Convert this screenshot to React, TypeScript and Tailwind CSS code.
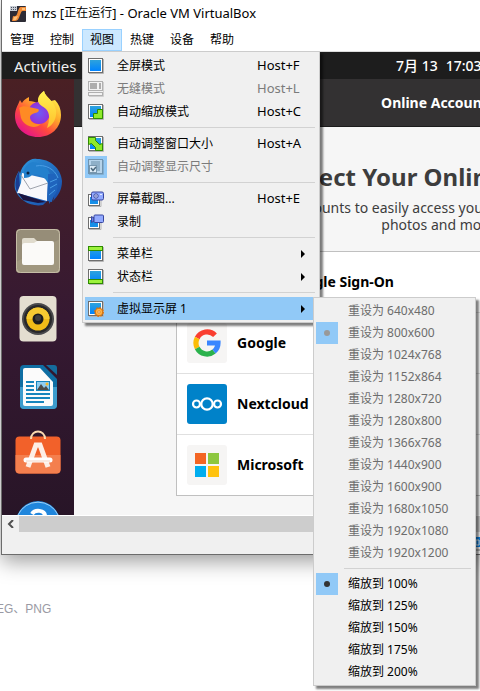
import type { ReactNode } from "react";
import clsx from "clsx";

const menus = ["管理", "控制", "视图", "热键", "设备", "帮助"];

const resolutions = [
  "640x480",
  "800x600",
  "1024x768",
  "1152x864",
  "1280x720",
  "1280x800",
  "1366x768",
  "1440x900",
  "1600x900",
  "1680x1050",
  "1920x1080",
  "1920x1200",
];

const scales = ["100%", "125%", "150%", "175%", "200%"];

/* ---------- menu icons ---------- */

const Screen = ({ children }: { children?: ReactNode }) => (
  <svg viewBox="0 0 16 16" className="size-4" aria-hidden="true">
    <defs>
      <linearGradient id="screen" x1="0" y1="0" x2="0" y2="1">
        <stop offset="0" stopColor="#2ea3dc" />
        <stop offset="1" stopColor="#0083ff" />
      </linearGradient>
    </defs>
    <path d="M1 15.5h14.5V1" fill="none" stroke="#b5b5b5" />
    <rect x=".5" y=".5" width="14" height="14" fill="#fff" stroke="#6e6e6e" />
    <rect x="2" y="2" width="11" height="11" fill="url(#screen)" />
    {children}
  </svg>
);

const FullscreenIcon = () => <Screen />;

const SeamlessIcon = () => (
  <svg viewBox="0 0 16 16" className="size-4" aria-hidden="true">
    <path d="M1 15.5h14.5V1" fill="none" stroke="#d0d0d0" />
    <rect x=".5" y=".5" width="14" height="9" fill="#f2f2f2" stroke="#b0b0b0" />
    <rect x="2" y="2" width="7" height="6" fill="#adadad" />
    <rect x="11" y="2" width="2" height="6" fill="#adadad" />
    <rect x=".5" y="11.5" width="14" height="3" fill="#f2f2f2" stroke="#b0b0b0" />
  </svg>
);

const ScaleIcon = () => (
  <Screen>
    <path d="M5.5 14.5v-5h4v-4h5v9z" fill="#8fea2c" stroke="#2e8b00" />
  </Screen>
);

const AdjustIcon = () => (
  <Screen>
    <path
      d="M.5 1.5h7v3l4 4 3-1v7h-7v-3l-4-4-3 1z"
      fill="#8fea2c"
      stroke="#2e8b00"
    />
  </Screen>
);

const AutoResizeIcon = () => (
  <svg viewBox="0 0 16 16" className="size-4" aria-hidden="true">
    <path d="M1 15.5h14.5V1" fill="none" stroke="#83aecf" />
    <rect x=".5" y=".5" width="14" height="14" fill="#b5d3ea" stroke="#6f94b0" />
    <path d="M3 2h9v10H9V6H3z" fill="#8fb0c8" />
    <rect x="1.5" y="6.5" width="7" height="7" fill="#dcebf6" stroke="#7897ae" />
    <path d="m3 9 2 2.5L8 8" fill="none" stroke="#4c687c" strokeWidth="1.5" />
  </svg>
);

const CameraIcon = () => (
  <svg viewBox="0 0 16 16" className="size-4" aria-hidden="true">
    <path d="M1 15.5h12V9" fill="none" stroke="#b5b5b5" />
    <rect x=".5" y="3.5" width="11" height="11" fill="#fff" stroke="#6e6e6e" />
    <rect x="2" y="6" width="8" height="7" fill="#168fe8" />
    <rect x="3.5" y="1" width="12" height="8" rx="1.5" fill="#92aaff" stroke="#39479f" />
    <circle cx="8" cy="5" r="2.2" fill="#d9e1ff" stroke="#39479f" />
    <circle cx="8" cy="5" r=".8" fill="#39479f" />
    <path d="M12 3.5h2" stroke="#e7ecff" />
  </svg>
);

const RecordIcon = () => (
  <svg viewBox="0 0 16 16" className="size-4" aria-hidden="true">
    <path d="M1 15.5h12V9" fill="none" stroke="#b5b5b5" />
    <rect x=".5" y="3.5" width="11" height="11" fill="#fff" stroke="#6e6e6e" />
    <rect x="2" y="6" width="8" height="7" fill="#168fe8" />
    <path d="M6 4 3.5 2.500v6L6 7z" fill="#6d83e8" stroke="#39479f" />
    <rect x="6" y="1" width="9.5" height="7.5" rx="1" fill="#92aaff" stroke="#39479f" />
  </svg>
);

const MenuBarIcon = () => (
  <Screen>
    <rect x=".5" y=".5" width="14" height="4" fill="#9cf23c" stroke="#2e8b00" />
  </Screen>
);

const StatusBarIcon = () => (
  <Screen>
    <rect x=".5" y="10.5" width="14" height="4" fill="#9cf23c" stroke="#2e8b00" />
  </Screen>
);

const VirtualScreenIcon = () => (
  <Screen>
    <circle cx="11" cy="11" r="3.8" fill="#ffb347" stroke="#d9720a" />
    <circle cx="11" cy="11" r="4.5" fill="none" stroke="#d9720a" strokeDasharray="1.8 1.7" />
    <circle cx="11" cy="11" r="1.2" fill="#fff1d8" stroke="#d9720a" strokeWidth=".7" />
  </Screen>
);

const MachineIcon = () => (
  <svg viewBox="0 0 16 16" className="size-4" aria-hidden="true">
    <rect width="16" height="16" rx="1" fill="#2d2b35" />
    <path d="M11 1h5v4h-3c-2 0-2 2-3 4-1 3-2 6-5 6H2l1-5c4 1 4-2 5-5 1-2 1-4 3-4z" fill="#f08a35" />
    <path d="M12 2h3v2h-3zM4 11l4-1-2 4H3z" fill="#ffc079" />
    <rect width="7" height="5" fill="#c8ccd4" />
    <path d="M1 1.5h5M1 3.5h5" stroke="#4c5563" strokeDasharray="1 1" />
  </svg>
);

/* ---------- dock icons ---------- */

const FirefoxIcon = () => (
  <svg viewBox="0 0 48 48" className="size-12" aria-hidden="true">
    <defs>
      <linearGradient id="fox" x1=".85" y1=".1" x2=".2" y2=".95">
        <stop offset="0" stopColor="#fff04a" />
        <stop offset=".35" stopColor="#ffa72a" />
        <stop offset=".65" stopColor="#ff4a3d" />
        <stop offset="1" stopColor="#e3128d" />
      </linearGradient>
      <linearGradient id="flame" x1="0" y1="0" x2="0" y2="1">
        <stop offset="0" stopColor="#fff250" />
        <stop offset="1" stopColor="#ffbf2b" />
      </linearGradient>
      <radialGradient id="globe">
        <stop offset="0" stopColor="#6f5cf5" />
        <stop offset="1" stopColor="#9430d8" />
      </radialGradient>
    </defs>
    <path
      d="M6 10c1 2 2 3 2 3 1-2 3-4 7-6v4c4 0 6 1 8 2l2-3c0-4 2-7 5-9 1 4 3 6 7 10l4-1c4 4 6 9 6 15 0 13-10 22-23 22S1 38 1 26C1 19 4 15 6 10z"
      fill="url(#fox)"
    />
    <circle cx="25" cy="23" r="11" fill="url(#globe)" />
    <path
      d="M24 10c0-4 3-7 6-9 1 6 10 9 12 19 1 9-3 15-9 18 3-8 3-15-1-19-3-3-8-4-8-9z"
      fill="url(#flame)"
    />
    <path
      d="M5 18c3-2 6-2 10-1l9 2c2 1 0 4-3 4-3 1-5 2-5 4 0 5 5 8 11 7-6 6-17 2-20-6-1-4-1-8-2-10z"
      fill="#ff8a24"
    />
  </svg>
);

const ThunderbirdIcon = () => (
  <svg viewBox="0 0 48 48" className="size-12" aria-hidden="true">
    <defs>
      <linearGradient id="bird" x1="0" y1="0" x2="1" y2="1">
        <stop offset="0" stopColor="#2f9be0" />
        <stop offset="1" stopColor="#1747a6" />
      </linearGradient>
    </defs>
    <path
      d="M12 5c3-3 7-5 11-4 13 0 24 9 25 22 0 9-4 15-9 20l1-4-5 7v-5l-6 6C17 49 5 43 1 31c-1-6 0-12 4-18l1 3c1-5 3-8 6-11z"
      fill="url(#bird)"
    />
    <path d="M5 13C1 20 0 29 4 36l10 7-8-12z" fill="#1a3d91" />
    <path d="m8 15 4 1 22 5-1 22L3 35l4-10z" fill="#f8f8fb" />
    <path d="m7 17 9 14 18-6" fill="none" stroke="#9fa3ad" />
    <path d="M10 14c0-5 4-9 9-10 8 1 15 5 17 12l-2 9c-3-6-9-9-15-9-3 3-5 4-9 4z" fill="#2380cd" />
    <path d="M34 16h6c4 5 5 12 2 19l-3 4-1 5-5-1 1-20z" fill="#1f64bd" />
    <path d="M22 8c9-2 19 3 22 12M36 24l7-3M36 30l7-4M35 37l6-5" fill="none" stroke="#4a9ee6" />
    <circle cx="14" cy="15" r="1.5" fill="#0b2342" />
    <path d="m4 35 28 9-8 1-15-3z" fill="#1b1440" />
  </svg>
);

const FilesIcon = () => (
  <svg viewBox="0 0 48 48" className="size-12" aria-hidden="true">
    <rect x="2" y="3" width="44" height="44" rx="4" fill="#968d78" />
    <path d="M2 36 46 13v30a4 4 0 0 1-4 4H6a4 4 0 0 1-4-4z" fill="#a0977f" />
    <rect x="2.5" y="3.5" width="43" height="43" rx="4" fill="none" stroke="#c5bda6" />
    <path d="M8 14a2 2 0 0 1 2-2h10l3 3v6H8z" fill="#e0dbcd" />
    <path d="M8 20c0-2 1-3 3-3h9l3-2h15a2 2 0 0 1 2 2v20a2 2 0 0 1-2 2H10a2 2 0 0 1-2-2z" fill="#fbfaf8" />
  </svg>
);

const RhythmboxIcon = () => (
  <svg viewBox="0 0 48 48" className="size-12" aria-hidden="true">
    <rect x="5.5" y="2" width="37" height="45.5" rx="4" fill="#e4ded0" />
    <circle cx="24" cy="25" r="16" fill="#4a4a4c" />
    <circle cx="24" cy="25" r="14" fill="#28282a" />
    <circle cx="24" cy="25" r="11.5" fill="#f0bb18" />
    <path d="M12.5 25a11.5 11.5 0 0 1 23 0z" fill="#f6ca32" />
    <circle cx="24" cy="25" r="5.5" fill="#1d1d1d" />
    <circle cx="24" cy="24" r="3" fill="#3e3e3e" />
  </svg>
);

const WriterIcon = () => (
  <svg viewBox="0 0 48 48" className="size-12" aria-hidden="true">
    <path d="M10 3h19l14 14v26a4 4 0 0 1-4 4H10a4 4 0 0 1-4-4V7a4 4 0 0 1 4-4z" fill="#0f6ea3" />
    <path d="M6 25h37v18a4 4 0 0 1-4 4H10a4 4 0 0 1-4-4z" fill="#3d9ccd" />
    <path d="M32 3h8a3 3 0 0 1 3 3v7z" fill="#156c9c" />
    <path d="M11 6h15l13 14v22a2 2 0 0 1-2 2H11a2 2 0 0 1-2-2V8a2 2 0 0 1 2-2z" fill="#fbfbfb" />
    <path d="M12 20h8M12 24h8M12 28h8M12 32h24M12 36h24M12 40h18" stroke="#1685bd" strokeWidth="2" />
    <rect x="22.5" y="19.5" width="13" height="9" fill="#8fcdf0" stroke="#1685bd" />
    <path d="m23 28 4-6 3 4 2-2 3 4z" fill="#4c4c48" />
    <circle cx="33" cy="22" r="1.5" fill="#f4b92a" />
  </svg>
);

const SoftwareIcon = () => (
  <svg viewBox="0 0 48 48" className="size-12" aria-hidden="true">
    <rect x="1.5" y="6.5" width="45" height="37" rx="4" fill="#f2612a" />
    <path d="M1.5 25h45v14.5a4 4 0 0 1-4 4h-37a4 4 0 0 1-4-4z" fill="#f47f4e" />
    <path d="M17 9c0-10 14-10 14 0" fill="none" stroke="#fbd9ae" strokeWidth="2" />
    <path d="m14 37 8-22h4l8 22" fill="none" stroke="#fdeee6" strokeWidth="5" />
    <path d="M12 30h24" stroke="#fff" strokeWidth="5" strokeLinecap="round" />
    <path d="M12 31h24" stroke="#f3d3c4" />
  </svg>
);

const HelpIcon = () => (
  <svg viewBox="0 0 48 48" className="size-12" aria-hidden="true">
    <circle cx="24" cy="25" r="22" fill="#2086dc" />
    <path d="M4 17a22 22 0 0 1 40 0" fill="none" stroke="#9bd0f7" />
    <path d="M18 16c3-5 13-4 13 2 0 5-6 5-6 11" fill="none" stroke="#fff" strokeWidth="4" />
  </svg>
);

const dock = [
  { name: "Firefox", icon: <FirefoxIcon /> },
  { name: "Thunderbird", icon: <ThunderbirdIcon /> },
  { name: "Files", icon: <FilesIcon /> },
  { name: "Rhythmbox", icon: <RhythmboxIcon /> },
  { name: "LibreOffice Writer", icon: <WriterIcon /> },
  { name: "Ubuntu Software", icon: <SoftwareIcon /> },
  { name: "Help", icon: <HelpIcon /> },
];

/* ---------- account logos ---------- */

const UbuntuLogo = () => (
  <svg viewBox="0 0 40 40" className="size-10" aria-hidden="true">
    <rect width="40" height="40" rx="3" fill="#f6f5f4" />
    <circle cx="20" cy="20" r="13" fill="#e95420" />
    <circle cx="20" cy="20" r="6" fill="none" stroke="#fff" strokeWidth="2" />
  </svg>
);

const GoogleLogo = () => (
  <svg viewBox="0 0 40 40" className="size-10" aria-hidden="true">
    <rect width="40" height="40" rx="3" fill="#f6f5f4" />
    <g fill="none" strokeWidth="5.2">
      <path d="M28 12.2A11 11 0 0 0 10.2 15" stroke="#fa3e30" />
      <path d="M10.2 15a11 11 0 0 0 0 10" stroke="#fbbc05" />
      <path d="M10.2 25A11 11 0 0 0 27 28.5" stroke="#2bb24c" />
      <path d="M27 28.5a11 11 0 0 0 4-8.5H20" stroke="#3a86ff" />
    </g>
  </svg>
);

const NextcloudLogo = () => (
  <svg viewBox="0 0 40 40" className="size-10" aria-hidden="true">
    <rect width="40" height="40" rx="3" fill="#0082c9" />
    <g fill="none" stroke="#fff" strokeWidth="2.2">
      <circle cx="20" cy="20" r="5.7" />
      <circle cx="9.5" cy="20" r="3.5" />
      <circle cx="30.5" cy="20" r="3.5" />
    </g>
  </svg>
);

const MicrosoftLogo = () => (
  <svg viewBox="0 0 40 40" className="size-10" aria-hidden="true">
    <rect width="40" height="40" rx="3" fill="#f6f5f4" />
    <path d="M8 8h11v11H8z" fill="#f36523" />
    <path d="M21 8h11v11H21z" fill="#8dc73f" />
    <path d="M8 21h11v11H8z" fill="#00adef" />
    <path d="M21 21h11v11H21z" fill="#ffc20e" />
  </svg>
);

const accounts = [
  { name: "Ubuntu Single Sign-On", logo: <UbuntuLogo /> },
  { name: "Google", logo: <GoogleLogo /> },
  { name: "Nextcloud", logo: <NextcloudLogo /> },
  { name: "Microsoft", logo: <MicrosoftLogo /> },
];

/* ---------- menus ---------- */

type ItemProps = {
  icon: ReactNode;
  label: string;
  shortcut?: string;
  disabled?: boolean;
  checked?: boolean;
  submenu?: boolean;
  active?: boolean;
};

const MenuItem = ({ icon, label, shortcut, disabled, checked, submenu, active }: ItemProps) => (
  <button
    type="button"
    role={checked ? "menuitemcheckbox" : "menuitem"}
    aria-checked={checked}
    aria-haspopup={submenu ? "menu" : undefined}
    disabled={disabled}
    className={clsx(
      "flex h-[23px] w-full items-center text-left",
      disabled ? "text-[#7b7b7b]" : "text-black",
      active && "bg-[#91c9f7]",
    )}
  >
    <span className={clsx("flex size-[22px] items-center justify-center", checked && "bg-[#91c9f7]")}>
      {icon}
    </span>
    <span className="ml-2.5 flex-1">{label}</span>
    {shortcut && <span className="w-15 text-[13px]">{shortcut}</span>}
    {submenu && (
      <svg viewBox="0 0 4 8" className="mr-3 h-2 w-1" aria-hidden="true">
        <path d="M0 0v8l4-4z" />
      </svg>
    )}
  </button>
);

const Separator = () => (
  <div role="separator" className="mr-0.5 ml-7 flex h-[9px] items-center">
    <div className="h-px flex-1 bg-[#d2d2d2]" />
  </div>
);

type RadioProps = { group: string; label: string; checked: boolean; disabled?: boolean };

const RadioItem = ({ group, label, checked, disabled }: RadioProps) => (
  <label className={clsx("flex h-[22px] items-center gap-2.5", disabled ? "text-[#6d6d6d]" : "text-black")}>
    <input
      type="radio"
      name={group}
      defaultChecked={checked}
      disabled={disabled}
      className="flex size-[22px] appearance-none items-center justify-center before:size-1.5 before:rounded-full before:bg-transparent checked:bg-[#91c9f7] checked:before:bg-[#333] checked:disabled:before:bg-[#999]"
    />
    {label}
  </label>
);

const panel = "border border-[#ccc] bg-[#f0f0f0] p-0.5 shadow-[3px_3px_2px_rgba(0,0,0,0.5)]";

const ScreenMenu = () => (
  <div role="menu" className={clsx("absolute top-0 left-full -ml-1 w-[163px]", panel)}>
    {resolutions.map((r) => (
      <RadioItem key={r} group="resolution" label={`重设为 ${r}`} checked={r === "800x600"} disabled />
    ))}
    <Separator />
    {scales.map((s) => (
      <RadioItem key={s} group="scale" label={`缩放到 ${s}`} checked={s === "100%"} />
    ))}
  </div>
);

const ViewMenu = () => (
  <div role="menu" className={clsx("absolute top-full left-0 z-10 w-[238px]", panel)}>
    <MenuItem icon={<FullscreenIcon />} label="全屏模式" shortcut="Host+F" />
    <MenuItem icon={<SeamlessIcon />} label="无缝模式" shortcut="Host+L" disabled />
    <MenuItem icon={<ScaleIcon />} label="自动缩放模式" shortcut="Host+C" />
    <Separator />
    <MenuItem icon={<AdjustIcon />} label="自动调整窗口大小" shortcut="Host+A" />
    <MenuItem icon={<AutoResizeIcon />} label="自动调整显示尺寸" disabled checked />
    <Separator />
    <MenuItem icon={<CameraIcon />} label="屏幕截图..." shortcut="Host+E" />
    <MenuItem icon={<RecordIcon />} label="录制" />
    <Separator />
    <MenuItem icon={<MenuBarIcon />} label="菜单栏" submenu />
    <MenuItem icon={<StatusBarIcon />} label="状态栏" submenu />
    <Separator />
    <div className="relative">
      <MenuItem icon={<VirtualScreenIcon />} label="虚拟显示屏 1" submenu active />
      <ScreenMenu />
    </div>
  </div>
);

const MenuBar = () => (
  <nav className="flex h-[22px]">
    {menus.map((m) => (
      <div key={m} className="relative">
        <button
          type="button"
          className={clsx(
            "h-[22px] w-10 border",
            m === "视图" ? "border-[#99d1ff] bg-[#cce8ff]" : "border-transparent",
          )}
        >
          {m}
        </button>
        {m === "视图" && <ViewMenu />}
      </div>
    ))}
  </nav>
);

/* ---------- guest ---------- */

const OnlineAccounts = () => (
  <section className="flex-1 bg-[#f6f6f6] text-[#3d3d3d]">
    <header className="flex h-12 items-center justify-center border-b border-[#1c1c1c] bg-[#333132] text-sm font-bold text-white">
      Online Accounts
    </header>
    <div className="flex flex-col items-center pt-8 text-center">
      <h1 className="text-2xl leading-9 font-bold">Connect Your Online Accounts</h1>
      <p className="mt-1 text-sm leading-[17px]">
        Connect your accounts to easily access your email, calendar, documents,
        <br />
        photos and more
      </p>
      <ul className="mt-[18px] w-[524px] border border-[#c0c0c0] bg-white text-left">
        {accounts.map((a) => (
          <li key={a.name} className="border-b border-[#e0e0e0] last:border-b-0">
            <button type="button" className="flex h-15 w-full items-center gap-2.5 px-2.5 text-sm font-bold text-black">
              {a.logo}
              {a.name}
            </button>
          </li>
        ))}
      </ul>
    </div>
  </section>
);

const Guest = () => (
  <div className="h-[463px] overflow-hidden">
    <div className="w-[800px]">
      <div className="flex h-[27px] items-center bg-[#1d1d1d] pl-3 text-[15px] text-[#f0f0f0]">
        <button type="button" className="w-[382px] text-left">
          Activities
        </button>
        <time className="flex gap-2 text-sm font-medium text-white">
          <span>7月 13</span>
          <span>17:03</span>
        </time>
      </div>
      <div className="flex">
        <aside className="flex w-18 flex-col bg-linear-to-b from-[#4a2024] via-[#361932] to-[#251425] pt-px">
          {dock.map((d) => (
            <button key={d.name} type="button" aria-label={d.name} className="flex h-17 items-center justify-center">
              {d.icon}
            </button>
          ))}
        </aside>
        <OnlineAccounts />
      </div>
    </div>
  </div>
);

const App = () => {
  return (
    <div className="min-h-screen overflow-hidden bg-white font-['Noto_Sans','Noto_Sans_CJK_SC',sans-serif] text-xs text-black">
      <div className="relative ml-px border-b border-l border-[#6c6c6c] bg-white shadow-[0_6px_20px_rgba(0,0,0,0.4)]">
        <div className="flex h-[29px] items-center gap-1.5 pb-0.5 pl-2">
          <MachineIcon />
          <h2 className="flex items-center text-[13px] whitespace-pre">
            mzs [<span className="text-xs">正在运行</span>] - Oracle VM VirtualBox
          </h2>
        </div>
        <MenuBar />
        <div className="h-px bg-[#dcdcdc]" />
        <Guest />
        <div className="flex h-[17px] items-center border-t border-white bg-[#f0f0f0]">
          <button type="button" aria-label="Scroll left" className="flex w-[17px] justify-center">
            <svg viewBox="0 0 7 8" className="h-2 w-[7px]" aria-hidden="true">
              <path d="M6 0 2 4l4 4" fill="none" stroke="#505050" strokeWidth="2" />
            </svg>
          </button>
          <div className="h-full flex-1 bg-[#cdcdcd]" />
        </div>
        <footer className="flex h-[22px] items-center justify-end bg-[#f0f0f0]">
          <svg viewBox="0 0 8 16" className="h-4 w-2" aria-hidden="true">
            <path d="M0 2h8v10H0z" fill="#0b84e8" />
            <path d="M4 5h3v5H4z" fill="none" stroke="#fff" />
            <path d="M0 15h8" stroke="#777" />
          </svg>
        </footer>
      </div>
      <p className="mt-[46px] -ml-1 font-['Liberation_Sans','Noto_Sans_CJK_SC',sans-serif] text-[#9a9aa4]">EG、PNG</p>
    </div>
  );
};

export default App;
